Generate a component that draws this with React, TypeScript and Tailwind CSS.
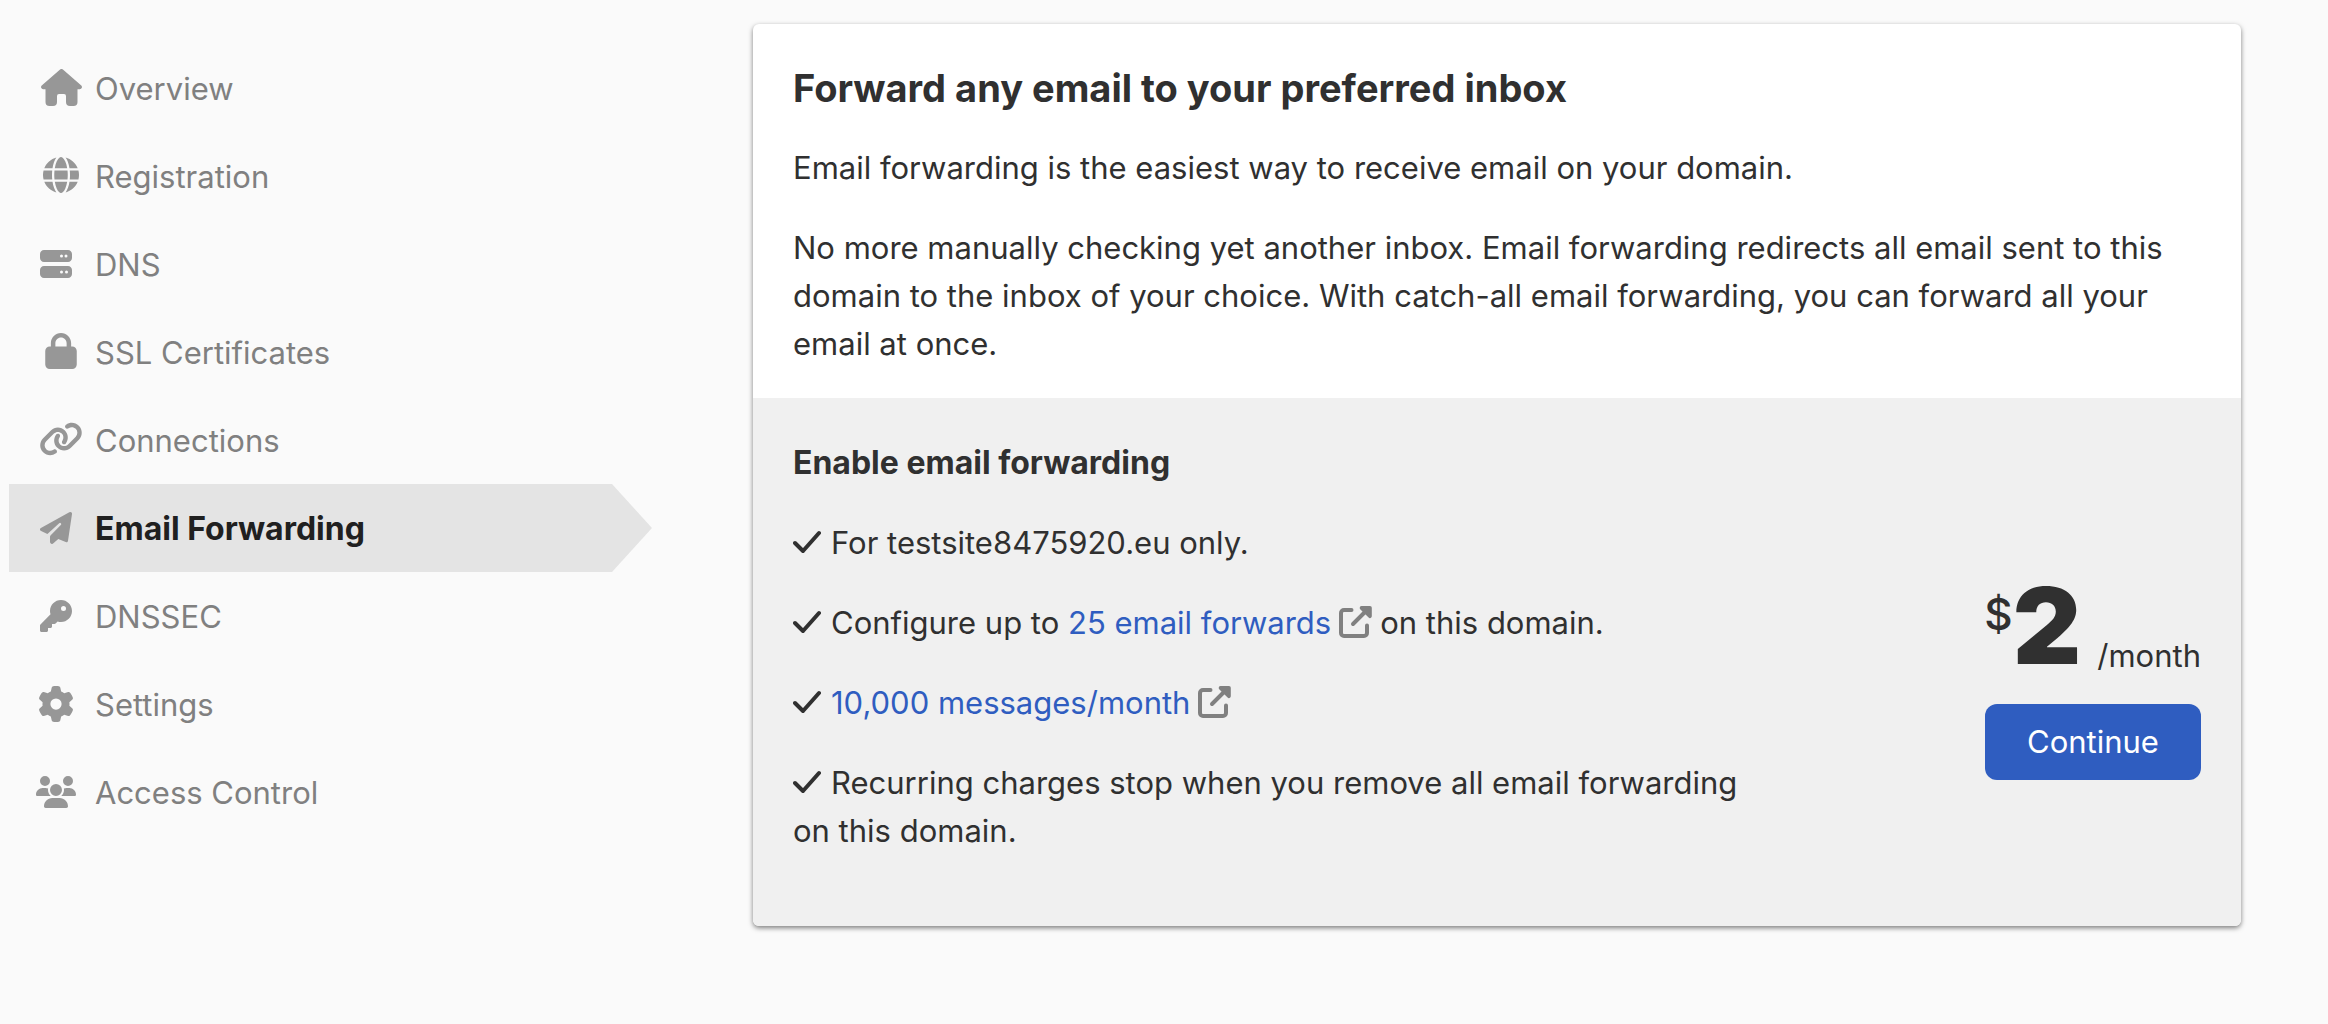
import type { ReactNode } from "react";
import { FaGlobe, FaServer, FaLock, FaLink, FaKey, FaGear } from "react-icons/fa6";

function HouseIcon() {
  return (
    <svg viewBox="0 0 41 37" className="h-[37px] w-[41px]" fill="currentColor" aria-hidden="true">
      <path d="M18.8.7a2.6 2.6 0 0 1 3.4 0L40 16.300a2.200 2.200 0 0 1-1.400 4H36.500V33a4 4 0 0 1-4 4H29a4 4 0 0 1-4-4v-6a2 2 0 0 0-2-2h-5a2 2 0 0 0-2 2v6a4 4 0 0 1-4 4H8.500a4 4 0 0 1-4-4V20.300H2.400A2.200 2.200 0 0 1 1 16.300z" />
    </svg>
  );
}

function PlaneIcon() {
  return (
    <svg viewBox="0 0 32 32" className="size-8" fill="currentColor" aria-hidden="true">
      <path d="M29.300.3A1.800 1.800 0 0 1 32 2.100L28 28.800a1.700 1.700 0 0 1-2.300 1.300L18.300 27l-4.900 4.300A2 2 0 0 1 10 29.900V25q0-1 .7-1.700L20.800 12.900A1.150 1.150 0 0 0 19.200 11.200L7.400 21.900 1.100 19.100A1.700 1.700 0 0 1 .9 16z" />
    </svg>
  );
}

function PeopleIcon() {
  return (
    <svg viewBox="0 0 640 512" className="h-8 w-10" fill="currentColor" aria-hidden="true">
      <path d="M144 0a80 80 0 1 1 0 160A80 80 0 1 1 144 0zM512 0a80 80 0 1 1 0 160A80 80 0 1 1 512 0zM0 298.700C0 239.800 47.800 192 106.700 192h42.700c15.900 0 31 3.500 44.600 9.700c-1.300 7.200-1.900 14.700-1.900 22.300c0 38.200 16.800 72.500 43.300 96H21.300C9.600 320 0 310.400 0 298.700zM405.300 320h-.7c26.600-23.500 43.300-57.800 43.300-96c0-7.600-.7-15-1.900-22.300c13.600-6.300 28.700-9.700 44.600-9.700h42.700C592.200 192 640 239.800 640 298.700c0 11.800-9.600 21.300-21.300 21.300zM224 224a96 96 0 1 1 192 0 96 96 0 1 1-192 0zM128 485.300C128 411.700 187.700 352 261.300 352H378.700C452.300 352 512 411.700 512 485.300c0 14.700-11.900 26.700-26.700 26.700H154.700c-14.700 0-26.700-11.900-26.700-26.700z" />
    </svg>
  );
}

function CheckIcon() {
  return (
    <svg
      viewBox="0 0 28 32"
      className="mr-2.5 inline-block h-8 w-7 align-[-4px]"
      fill="none"
      stroke="currentColor"
      strokeWidth="4"
      strokeLinecap="round"
      strokeLinejoin="round"
      aria-hidden="true"
    >
      <path d="M2 17l8 8L26 7" />
    </svg>
  );
}

function ExternalIcon() {
  return (
    <svg viewBox="0 0 33 32" className="mx-2 inline-block h-8 w-[33px] align-[-4px] text-[#808080]" aria-hidden="true">
      <path
        d="M12.500 4H5a3 3 0 0 0-3 3v20a3 3 0 0 0 3 3h20a3 3 0 0 0 3-3v-7.500M14 18L27 5"
        fill="none"
        stroke="currentColor"
        strokeWidth="4"
        strokeLinecap="round"
      />
      <path d="M22.500 0H31A1.800 1.800 0 0 1 32.800 1.800V10.300a1.900 1.900 0 0 1-3.200 1.300L21.200 3.200A1.900 1.900 0 0 1 22.500 0z" fill="currentColor" />
    </svg>
  );
}

type Item = { label: string; icon: ReactNode; large?: boolean; active?: boolean };

const items: Item[] = [
  { label: "Overview", icon: <HouseIcon />, large: true },
  { label: "Registration", icon: <FaGlobe className="size-9" />, large: true },
  { label: "DNS", icon: <FaServer className="size-8" /> },
  { label: "SSL Certificates", icon: <FaLock className="h-9 w-8" />, large: true },
  { label: "Connections", icon: <FaLink className="h-9 w-11" />, large: true },
  { label: "Email Forwarding", icon: <PlaneIcon />, active: true },
  { label: "DNSSEC", icon: <FaKey className="size-8" /> },
  { label: "Settings", icon: <FaGear className="size-9" /> },
  { label: "Access Control", icon: <PeopleIcon /> },
];

function NavItem({ label, icon, large, active }: Item) {
  return (
    <li>
      <a
        href="#"
        aria-current={active ? "page" : undefined}
        className={
          active
            ? "flex h-22 items-center bg-[#e4e4e4] pl-6 text-[32px] font-bold text-[#202020] [clip-path:polygon(0_0,calc(100%-40px)_0,100%_50%,calc(100%-40px)_100%,0_100%)]"
            : "flex h-22 items-center pl-6 text-[#808080]"
        }
      >
        <span
          className={
            large
              ? "flex w-[62px] shrink-0 justify-center pr-1.5 pb-0.5 text-[#979797]"
              : "flex w-[62px] shrink-0 justify-center pr-4 text-[#979797]"
          }
        >
          <span className="shrink-0">{icon}</span>
        </span>
        <span className="pt-0.5">{label}</span>
      </a>
    </li>
  );
}

export default function App() {
  return (
    <div className="min-h-screen bg-[#fafafa] font-['Inter',sans-serif] text-[31px] leading-12 text-[#303030]">
      <div className="flex items-start pr-[87px] pl-[9px]">
        <nav aria-label="Domain" className="w-[29%] max-w-[643px] shrink-0 pt-11">
          <ul>
            {items.map((item) => (
              <NavItem key={item.label} {...item} />
            ))}
          </ul>
        </nav>
        <main className="mt-6 ml-[101px] min-w-0 flex-1 overflow-hidden rounded-md bg-white shadow-[0_2px_5px_rgba(0,0,0,0.5)]">
          <section className="space-y-8 px-10 pt-10 pb-[30px]">
            <h1 className="text-[38px] font-bold">Forward any email to your preferred inbox</h1>
            <p>Email forwarding is the easiest way to receive email on your domain.</p>
            <p>
              No more manually checking yet another inbox. Email forwarding redirects all email sent to this domain to
              the inbox of your choice. With catch-all email forwarding, you can forward all your email at once.
            </p>
          </section>
          <section className="flex items-end justify-between bg-[#f0f0f0] px-10 pt-[41px] pb-[71px]">
            <div className="w-[960px] space-y-8">
              <h2 className="text-[32px] font-bold">Enable email forwarding</h2>
              <ul className="space-y-8">
                <li>
                  <CheckIcon />
                  For testsite8475920.eu only.
                </li>
                <li>
                  <CheckIcon />
                  Configure up to{" "}
                  <a href="#" className="text-[#2f5dc0]">
                    25 email forwards
                  </a>
                  <ExternalIcon />
                  on this domain.
                </li>
                <li>
                  <CheckIcon />
                  <a href="#" className="text-[#2f5dc0]">
                    10,000 messages/month
                  </a>
                  <ExternalIcon />
                </li>
                <li>
                  <CheckIcon />
                  Recurring charges stop when you remove all email forwarding on this domain.
                </li>
              </ul>
            </div>
            <div className="flex flex-col items-end gap-6 pb-[75px]">
              <p className="flex items-end">
                <span className="mt-3 self-start text-[44px] font-medium">$</span>
                <span className="mb-1.5 text-[106px] leading-24 font-black">2</span>
                <span className="ml-4">/month</span>
              </p>
              <button type="button" className="h-19 w-[216px] rounded-xl bg-[#2f5dc0] text-white">
                Continue
              </button>
            </div>
          </section>
        </main>
      </div>
    </div>
  );
}
